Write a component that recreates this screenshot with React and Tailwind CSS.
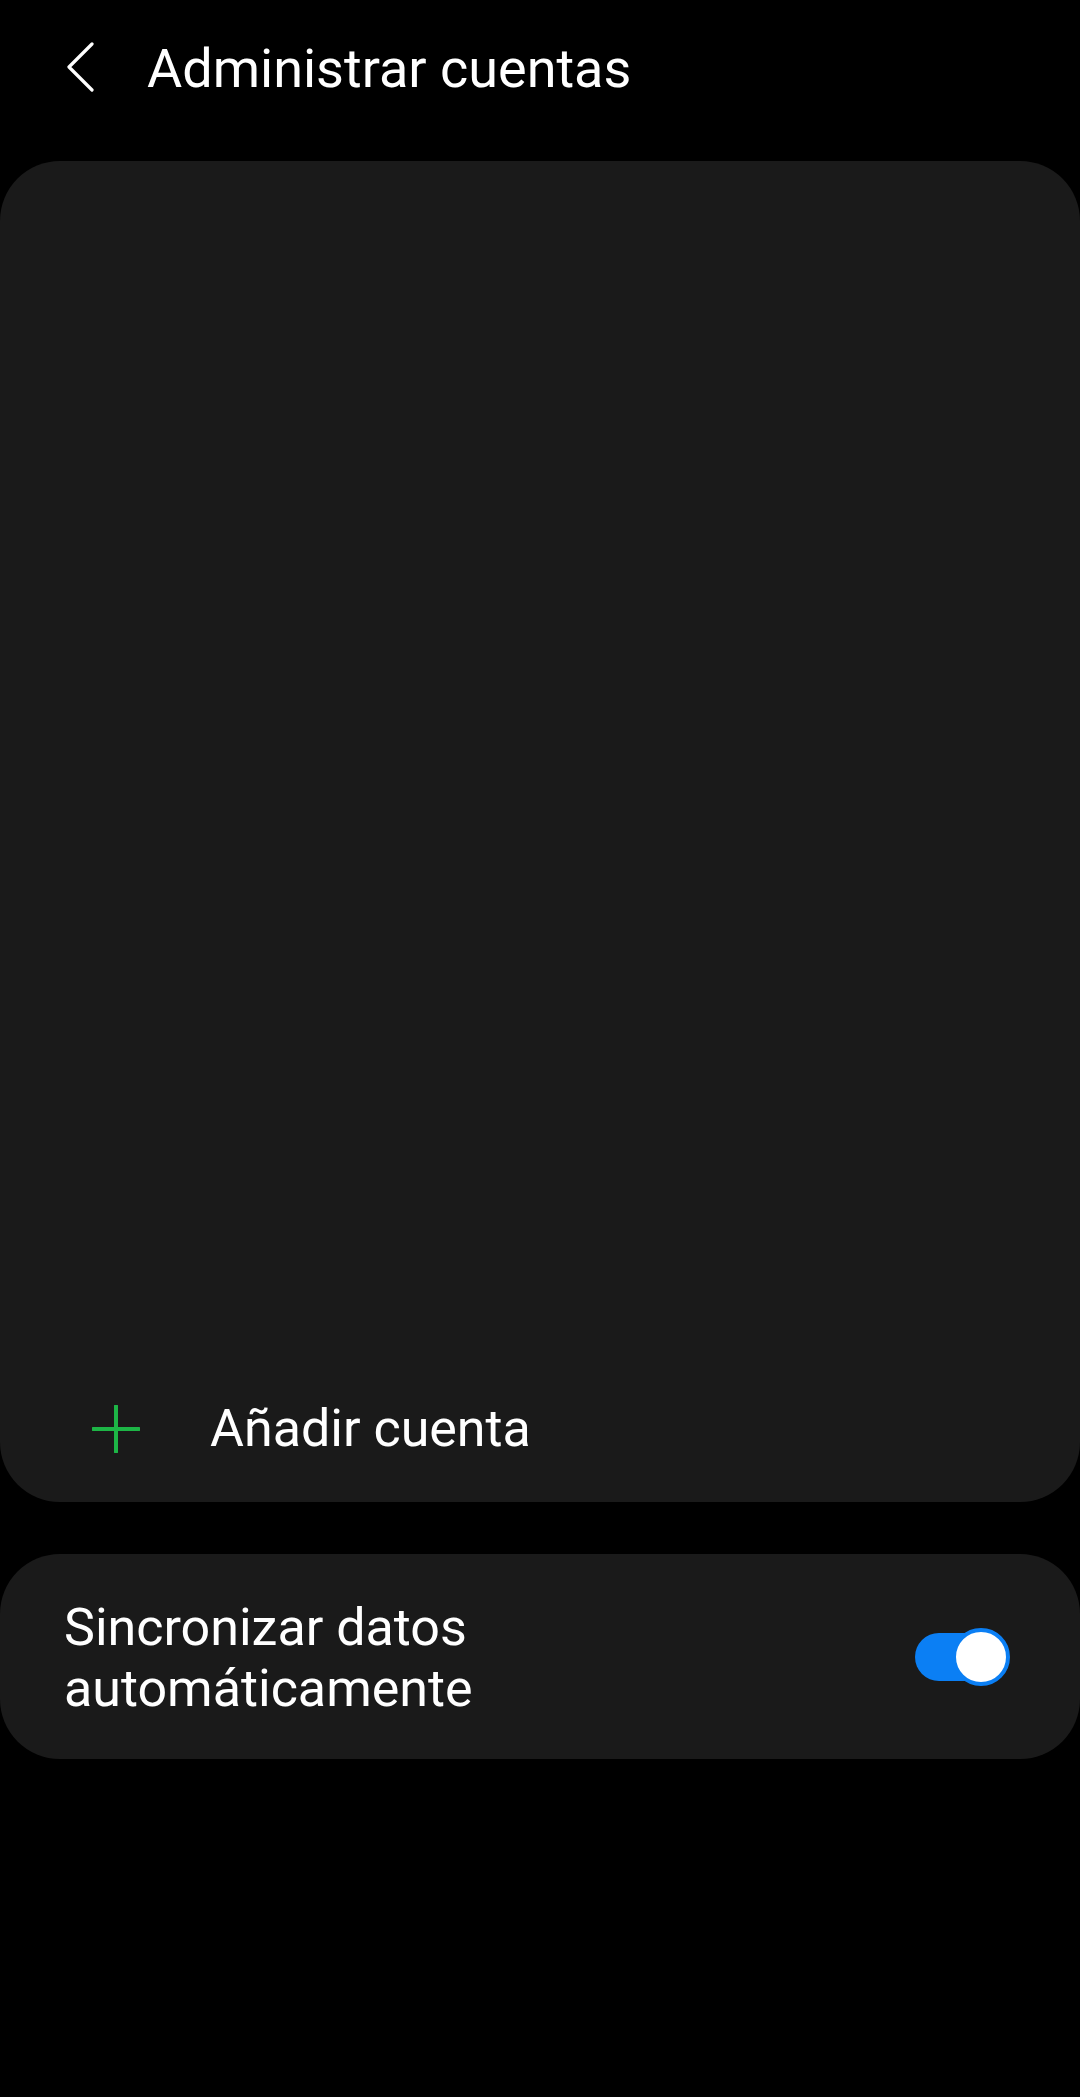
import React, { useState } from "react";

const font = { fontFamily: "Roboto, 'Noto Sans', sans-serif" };

const BackIcon = () => (
  <svg width="30" height="52" viewBox="0 0 30 52" fill="none">
    <path d="M25 3 L2 26 L25 49" stroke="white" strokeWidth="3.2" strokeLinecap="round" strokeLinejoin="round" />
  </svg>
);

const PlusIcon = () => (
  <svg width="48" height="48" viewBox="0 0 48 48" fill="none">
    <path d="M24 1v46M1 24h46" stroke="#1db546" strokeWidth="4" strokeLinecap="round" />
  </svg>
);

const Toggle = ({ on, onChange }) => (
  <button onClick={() => onChange(!on)} className="relative w-[98px] h-[58px] flex items-center">
    <span className={`absolute left-[3px] w-[88px] h-[48px] rounded-full ${on ? "bg-[#0b7ff4]" : "bg-[#555]"}`} />
    <span
      className={`absolute top-0 w-[58px] h-[58px] rounded-full bg-white border-[4px] ${
        on ? "left-[40px] border-[#0b7ff4]" : "left-0 border-[#555]"
      }`}
    />
  </button>
);

export default function App() {
  const [sync, setSync] = useState(true);

  return (
    <div className="w-[1080px] h-[2097px] bg-black text-white" style={font}>
      {/* header */}
      <div className="h-[161px] flex items-start pt-[41px]">
        <div className="w-[147px] pl-[67px] flex">
          <BackIcon />
        </div>
        <h1 className="text-[54px] leading-[52px] font-normal mt-[2px]">Administrar cuentas</h1>
      </div>

      {/* accounts card */}
      <div className="h-[1341px] bg-[#1a1a1a] rounded-[60px] flex flex-col justify-end">
        <div className="h-[146px] flex items-center">
          <div className="w-[210px] pl-[92px] flex">
            <PlusIcon />
          </div>
          <span className="text-[52px] leading-[60px]">Añadir cuenta</span>
        </div>
      </div>

      {/* sync card */}
      <div className="mt-[52px] h-[205px] bg-[#1a1a1a] rounded-[60px] flex items-center justify-between pl-[64px] pr-[70px]">
        <div className="text-[52px] leading-[61px] pt-[2px]">
          <div>Sincronizar datos</div>
          <div>automáticamente</div>
        </div>
        <Toggle on={sync} onChange={setSync} />
      </div>
    </div>
  );
}
